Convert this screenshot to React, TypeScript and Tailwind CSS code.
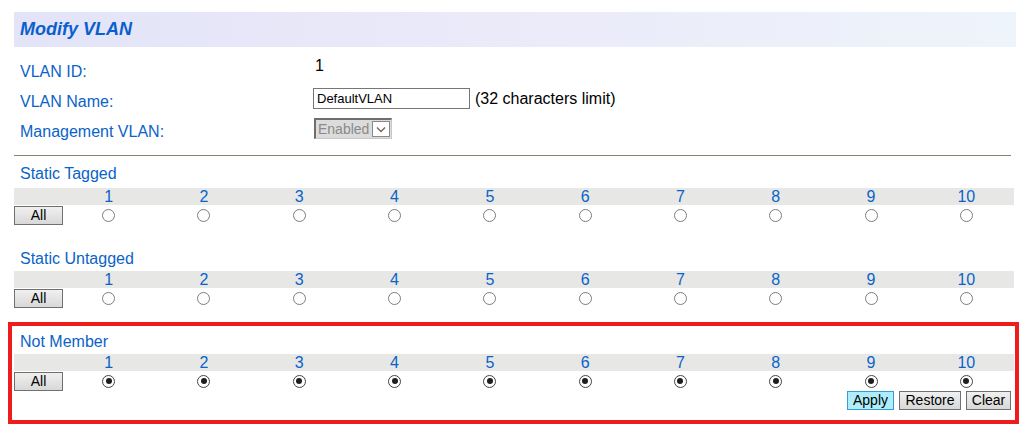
const ports = [1, 2, 3, 4, 5, 6, 7, 8, 9, 10];

function Radio({ checked }: { checked: boolean }) {
  return (
    <div
      className={
        "w-[13px] h-[13px] shrink-0 rounded-full border bg-white flex items-center justify-center " +
        (checked ? "border-[#444]" : "border-[#7d7d7d]")
      }
    >
      {checked && <div className="w-[6px] h-[6px] rounded-full bg-[#1e1e1e]" />}
    </div>
  );
}

function GrayButton({ label, width }: { label: string; width: string }) {
  return (
    <button
      className={
        "h-[19px] shrink-0 border border-[#707070] bg-gradient-to-b from-[#f0f0f0] to-[#d8d8d8] text-[14px] leading-[17px] text-black " +
        width
      }
    >
      {label}
    </button>
  );
}

function PortSection({
  title,
  checked,
  headerTop,
  bandGap,
}: {
  title: string;
  checked: boolean;
  headerTop: string;
  bandGap: string;
}) {
  return (
    <div>
      <div className={"pl-[6px] text-[16px] leading-[18px] text-[#0a63c9] " + headerTop}>
        {title}
      </div>
      <div className={"grid grid-cols-[47px_repeat(10,1fr)] w-[1000px] " + bandGap}>
        <div className="h-[17px] bg-[#e7e8e5]" />
        {ports.map((p) => (
          <div
            key={p}
            className="h-[17px] bg-[#e7e8e5] text-center text-[16px] leading-[18px] text-[#0a63c9]"
          >
            {p}
          </div>
        ))}
        <div className="h-[20px] flex items-center overflow-visible">
          <GrayButton label="All" width="w-[49px]" />
        </div>
        {ports.map((p) => (
          <div key={p} className="h-[20px] flex items-center justify-center">
            <Radio checked={checked} />
          </div>
        ))}
      </div>
    </div>
  );
}

export default function App() {
  return (
    <div className="pl-[14px] pt-[12px] bg-white min-h-[435px] font-['Liberation_Sans',Arial,sans-serif]">
      <div className="w-[1002px] h-[35px] bg-gradient-to-r from-[#e3e4f8] via-[#ebeaf9] to-[#eef4fb] pl-[6px] flex items-center">
        <span className="text-[18px] font-bold italic text-[#0a5fcc]">Modify VLAN</span>
      </div>

      <div className="mt-[9px] text-[16px] leading-[18px]">
        <div className="grid grid-cols-[299px_1fr] h-[30px] items-start">
          <div className="pl-[6px] mt-[7px] text-[#0a63c9]">VLAN ID:</div>
          <div className="pl-[2px] mt-[1px] text-black">1</div>
        </div>
        <div className="grid grid-cols-[299px_1fr] h-[30px] items-start">
          <div className="pl-[6px] mt-[7px] text-[#0a63c9]">VLAN Name:</div>
          <div className="mt-[2px] flex items-center">
            <div className="w-[157px] h-[21px] border border-[#767676] bg-white px-[3px] text-[13px] leading-[19px] text-black">
              DefaultVLAN
            </div>
            <span className="ml-[5px] text-black">(32 characters limit)</span>
          </div>
        </div>
        <div className="grid grid-cols-[299px_1fr] h-[30px] items-start">
          <div className="pl-[6px] mt-[7px] text-[#0a63c9]">Management VLAN:</div>
          <div className="mt-[2px] pl-[1px] flex">
            <div className="w-[78px] h-[21px] border-l-2 border-t-2 border-[#6e6e6e] border-r border-b border-r-[#c8c8c8] border-b-[#c8c8c8] bg-[#dcdcdc] flex items-center">
              <span className="pl-[2px] text-[14px] leading-[17px] text-[#8a8a8a]">Enabled</span>
              <div className="ml-auto mr-[1px] w-[18px] h-[16px] bg-white border border-[#8a8a8a] flex items-center justify-center">
                <svg width="10" height="7" viewBox="0 0 10 7">
                  <path d="M1 1.5 L5 5.5 L9 1.5" fill="none" stroke="#6a6a6a" strokeWidth="1.4" />
                </svg>
              </div>
            </div>
          </div>
        </div>
      </div>

      <div className="mt-[9px] w-[997px] border-t border-[#85856a]" />

      <PortSection title="Static Tagged" checked={false} headerTop="mt-[9px]" bandGap="mt-[5px]" />
      <PortSection title="Static Untagged" checked={false} headerTop="mt-[25px]" bandGap="mt-[3px]" />

      <div className="mt-[14px] -ml-[6px] w-[1011px] border-[4px] border-[#ee1c1c] pl-[2px] pt-[7px] pb-[10px]">
        <PortSection title="Not Member" checked={true} headerTop="mt-0" bandGap="mt-[3px]" />
        <div className="w-[997px] flex justify-end gap-[5px]">
          <button className="w-[47px] h-[19px] border border-[#3c9bd6] bg-[#aeeefb] text-[14px] leading-[17px] text-black">
            Apply
          </button>
          <GrayButton label="Restore" width="w-[62px]" />
          <GrayButton label="Clear" width="w-[45px]" />
        </div>
      </div>
    </div>
  );
}
